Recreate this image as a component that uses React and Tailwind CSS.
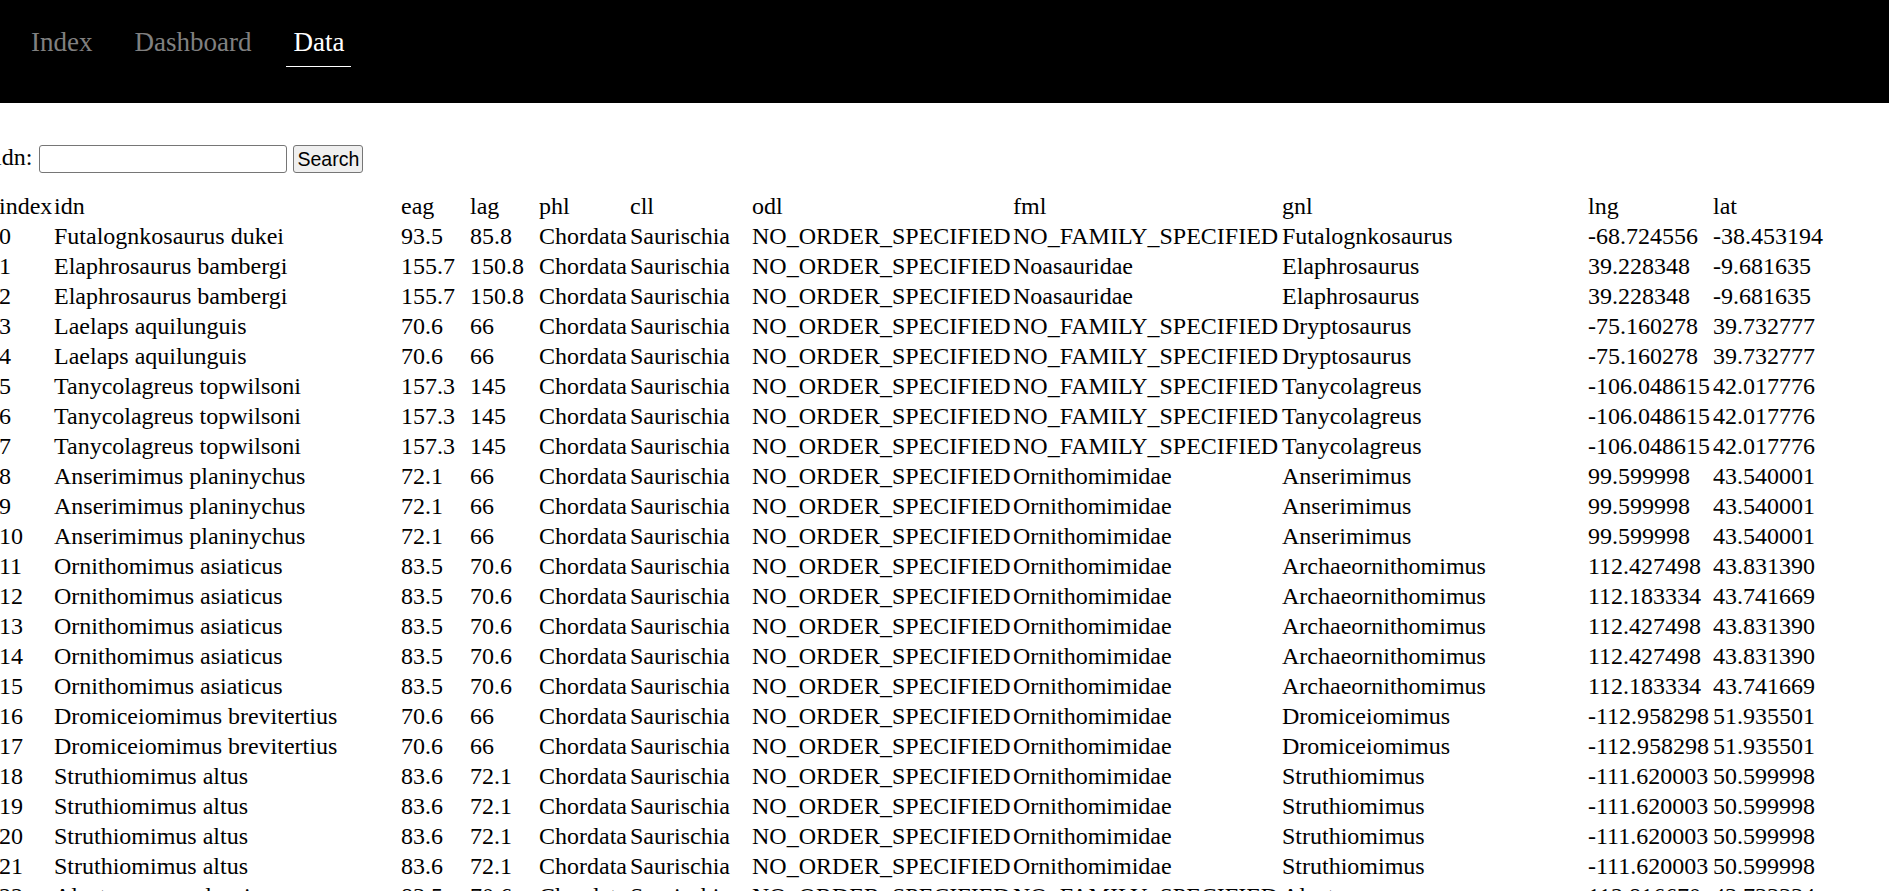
import React, { useState } from 'react';

const columns = [
  { key: 'index', width: 'w-[55px]' },
  { key: 'idn', width: 'w-[347px]' },
  { key: 'eag', width: 'w-[69px]' },
  { key: 'lag', width: 'w-[69px]' },
  { key: 'phl', width: 'w-[91px]' },
  { key: 'cll', width: 'w-[122px]' },
  { key: 'odl', width: 'w-[261px]' },
  { key: 'fml', width: 'w-[269px]' },
  { key: 'gnl', width: 'w-[306px]' },
  { key: 'lng', width: 'w-[125px]' },
  { key: 'lat', width: 'w-[113px]' },
];

const NO_ORDER = 'NO_ORDER_SPECIFIED';
const NO_FAMILY = 'NO_FAMILY_SPECIFIED';

const row = (idn, eag, lag, fml, gnl, lng, lat) => ({
  idn,
  eag,
  lag,
  phl: 'Chordata',
  cll: 'Saurischia',
  odl: NO_ORDER,
  fml,
  gnl,
  lng,
  lat,
});

const records = [
  row('Futalognkosaurus dukei', '93.5', '85.8', NO_FAMILY, 'Futalognkosaurus', '-68.724556', '-38.453194'),
  row('Elaphrosaurus bambergi', '155.7', '150.8', 'Noasauridae', 'Elaphrosaurus', '39.228348', '-9.681635'),
  row('Elaphrosaurus bambergi', '155.7', '150.8', 'Noasauridae', 'Elaphrosaurus', '39.228348', '-9.681635'),
  row('Laelaps aquilunguis', '70.6', '66', NO_FAMILY, 'Dryptosaurus', '-75.160278', '39.732777'),
  row('Laelaps aquilunguis', '70.6', '66', NO_FAMILY, 'Dryptosaurus', '-75.160278', '39.732777'),
  row('Tanycolagreus topwilsoni', '157.3', '145', NO_FAMILY, 'Tanycolagreus', '-106.048615', '42.017776'),
  row('Tanycolagreus topwilsoni', '157.3', '145', NO_FAMILY, 'Tanycolagreus', '-106.048615', '42.017776'),
  row('Tanycolagreus topwilsoni', '157.3', '145', NO_FAMILY, 'Tanycolagreus', '-106.048615', '42.017776'),
  row('Anserimimus planinychus', '72.1', '66', 'Ornithomimidae', 'Anserimimus', '99.599998', '43.540001'),
  row('Anserimimus planinychus', '72.1', '66', 'Ornithomimidae', 'Anserimimus', '99.599998', '43.540001'),
  row('Anserimimus planinychus', '72.1', '66', 'Ornithomimidae', 'Anserimimus', '99.599998', '43.540001'),
  row('Ornithomimus asiaticus', '83.5', '70.6', 'Ornithomimidae', 'Archaeornithomimus', '112.427498', '43.831390'),
  row('Ornithomimus asiaticus', '83.5', '70.6', 'Ornithomimidae', 'Archaeornithomimus', '112.183334', '43.741669'),
  row('Ornithomimus asiaticus', '83.5', '70.6', 'Ornithomimidae', 'Archaeornithomimus', '112.427498', '43.831390'),
  row('Ornithomimus asiaticus', '83.5', '70.6', 'Ornithomimidae', 'Archaeornithomimus', '112.427498', '43.831390'),
  row('Ornithomimus asiaticus', '83.5', '70.6', 'Ornithomimidae', 'Archaeornithomimus', '112.183334', '43.741669'),
  row('Dromiceiomimus brevitertius', '70.6', '66', 'Ornithomimidae', 'Dromiceiomimus', '-112.958298', '51.935501'),
  row('Dromiceiomimus brevitertius', '70.6', '66', 'Ornithomimidae', 'Dromiceiomimus', '-112.958298', '51.935501'),
  row('Struthiomimus altus', '83.6', '72.1', 'Ornithomimidae', 'Struthiomimus', '-111.620003', '50.599998'),
  row('Struthiomimus altus', '83.6', '72.1', 'Ornithomimidae', 'Struthiomimus', '-111.620003', '50.599998'),
  row('Struthiomimus altus', '83.6', '72.1', 'Ornithomimidae', 'Struthiomimus', '-111.620003', '50.599998'),
  row('Struthiomimus altus', '83.6', '72.1', 'Ornithomimidae', 'Struthiomimus', '-111.620003', '50.599998'),
  row('Alectrosaurus olseni', '83.5', '70.6', NO_FAMILY, 'Alectrosaurus', '112.816670', '43.733334'),
  row('Alectrosaurus olseni', '83.5', '70.6', NO_FAMILY, 'Alectrosaurus', '112.816670', '43.733334'),
];

const navLinks = ['Index', 'Dashboard', 'Data'];

const App = () => {
  const [query, setQuery] = useState('');
  const active = 'Data';

  return (
    <div className="min-h-screen bg-white text-black font-['Liberation_Serif',serif] text-[24px]">
      {/* top bar */}
      <nav className="h-[103px] bg-black flex items-start pl-[24px] pt-[27px] gap-[28px]">
        {navLinks.map((link) => (
          <a
            key={link}
            href="#"
            className={`block px-[7px] pb-[8px] text-[27px] leading-[31px] border-b ${
              link === active ? 'text-white border-white' : 'text-[#808080] border-transparent'
            }`}
          >
            {link}
          </a>
        ))}
      </nav>

      {/* search form */}
      <form className="mt-[42px] flex items-start h-[28px]" onSubmit={(e) => e.preventDefault()}>
        <label className="-ml-[5px] leading-[25px] mr-[7px]">idn:</label>
        <input
          type="text"
          value={query}
          onChange={(e) => setQuery(e.target.value)}
          className="w-[248px] h-[28px] border border-[#767676] rounded-[3px] bg-white px-[3px] outline-none"
        />
        <button
          type="submit"
          className="ml-[6px] w-[70px] h-[28px] border border-[#767676] rounded-[3px] bg-[#efefef] font-['Liberation_Sans',Arial,sans-serif] text-[19.5px] leading-[22px] text-black"
        >
          Search
        </button>
      </form>

      {/* data table */}
      <table className="mt-[18px] -ml-[2px] table-fixed w-[1827px]">
        <thead>
          <tr>
            {columns.map((col) => (
              <th key={col.key} className={`${col.width} p-px text-left font-normal leading-[28px] whitespace-nowrap`}>
                {col.key}
              </th>
            ))}
          </tr>
        </thead>
        <tbody>
          {records.map((rec, i) => (
            <tr key={i}>
              <td className="p-px leading-[28px] whitespace-nowrap">{i}</td>
              {columns.slice(1).map((col) => (
                <td key={col.key} className="p-px leading-[28px] whitespace-nowrap">
                  {rec[col.key]}
                </td>
              ))}
            </tr>
          ))}
        </tbody>
      </table>
    </div>
  );
};

export default App;
